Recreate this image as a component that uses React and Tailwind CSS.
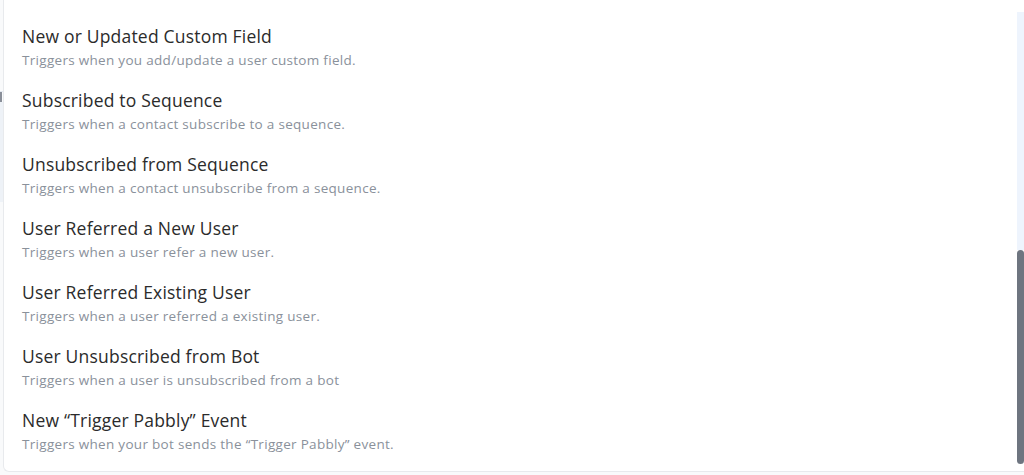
const ITEMS = [
  ['New or Updated Custom Field', 'Triggers when you add/update a user custom field.'],
  ['Subscribed to Sequence', 'Triggers when a contact subscribe to a sequence.'],
  ['Unsubscribed from Sequence', 'Triggers when a contact unsubscribe from a sequence.'],
  ['User Referred a New User', 'Triggers when a user refer a new user.'],
  ['User Referred Existing User', 'Triggers when a user referred a existing user.'],
  ['User Unsubscribed from Bot', 'Triggers when a user is unsubscribed from a bot'],
  ['New \u201CTrigger Pabbly\u201D Event', 'Triggers when your bot sends the \u201CTrigger Pabbly\u201D event.'],
]

export default function App() {
  return (
    <div className="w-[1024px] h-[475px] bg-[#f9fafb] overflow-hidden flex" style={{ fontFamily: '"Open Sans", "Noto Sans", sans-serif' }}>
      {/* sliver of the page behind the dropdown */}
      <div className="w-[3px] shrink-0 flex flex-col">
        <div className="h-[92px] border-b border-[#e3e8f0]" />
        <div className="h-[10px] bg-[#8a8f99] w-[2px]" />
        <div className="h-[100px] bg-[#eef2f7]" />
      </div>
      <div className="flex-1 h-[472px] bg-white border-l border-b border-[#e8eaed] rounded-bl-md flex">
        <div className="flex-1 pt-[25px] pl-[18px]">
          {ITEMS.map(([t, d]) => (
            <div key={t} className="h-[64px]">
              <div className="text-[17.5px] leading-[22px] text-[#2b2b2b] tracking-[0.2px]">{t}</div>
              <div className="text-[13.5px] leading-[18px] mt-[4px] text-[#8a919b] tracking-[0.3px]">{d}</div>
            </div>
          ))}
        </div>
        <div className="w-[7px] flex flex-col pt-[12px] pb-[7px]">
          <div className="h-[238px] bg-[#eef4fd]" />
          <div className="flex-1 bg-[#6e7580] rounded-sm" />
        </div>
      </div>
    </div>
  )
}
